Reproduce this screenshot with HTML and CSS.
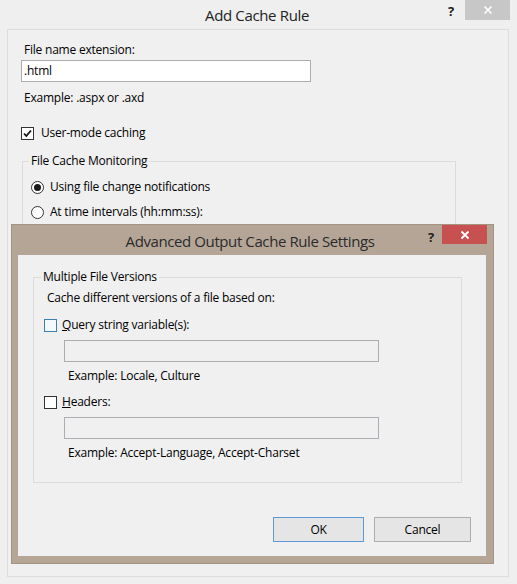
FILE: index.html
```html
<!DOCTYPE html>
<html lang="en">
<head>
<meta charset="utf-8">
<title>Add Cache Rule</title>
<link rel="stylesheet" href="styles.css">
</head>
<body>
<div class="window">
  <div class="titlebar">
    <div class="title">Add Cache Rule</div>
    <div class="help">?</div>
    <div class="close close-inactive">
      <svg width="10" height="10" viewBox="0 0 10 10"><path d="M1.5 1.5 L8.5 8.5 M8.5 1.5 L1.5 8.5" stroke="#fff" stroke-width="1.6"/></svg>
    </div>
  </div>
  <div class="panel">
    <div class="text lbl">File name extension:</div>
    <div class="input ext">.html</div>
    <div class="text lbl example1">Example: .aspx or .axd</div>
    <div class="row check-row">
      <span class="check checked">
        <svg width="11" height="11" viewBox="0 0 11 11"><path d="M2 5.5 L4.3 8 L9 2.5" fill="none" stroke="#111" stroke-width="1.8"/></svg>
      </span>
      <span class="text">User-mode caching</span>
    </div>
    <div class="group monitor">
      <div class="group-title">File Cache Monitoring</div>
      <div class="row radio-row first">
        <span class="radio selected"><span class="dot"></span></span>
        <span class="text">Using file change notifications</span>
      </div>
      <div class="row radio-row">
        <span class="radio"></span>
        <span class="text">At time intervals (hh:mm:ss):</span>
      </div>
    </div>
  </div>
</div>

<div class="dialog">
  <div class="dialog-titlebar">
    <div class="dialog-title">Advanced Output Cache Rule Settings</div>
    <div class="help dialog-help">?</div>
    <div class="close close-active">
      <svg width="10" height="10" viewBox="0 0 10 10"><path d="M1.5 1.5 L8.5 8.5 M8.5 1.5 L1.5 8.5" stroke="#fff" stroke-width="1.8"/></svg>
    </div>
  </div>
  <div class="client">
    <div class="group versions">
      <div class="group-title">Multiple File Versions</div>
      <div class="text intro">Cache different versions of a file based on:</div>
      <div class="row opt-row">
        <span class="check hover"></span>
        <span class="text"><u>Q</u>uery string variable(s):</span>
      </div>
      <div class="input disabled"></div>
      <div class="text hint">Example: Locale, Culture</div>
      <div class="row opt-row second">
        <span class="check"></span>
        <span class="text"><u>H</u>eaders:</span>
      </div>
      <div class="input disabled"></div>
      <div class="text hint">Example: Accept-Language, Accept-Charset</div>
    </div>
    <div class="buttons">
      <button class="btn default">OK</button>
      <button class="btn cancel">Cancel</button>
    </div>
  </div>
</div>
</body>
</html>
```

FILE: styles.css
```css
* { box-sizing: border-box; }

html, body {
  margin: 0;
  padding: 0;
}

body {
  width: 517px;
  height: 584px;
  background: #efefef;
  font-family: "Open Sans", "Noto Sans", "DejaVu Sans", sans-serif;
  font-size: 12px;
  letter-spacing: -0.22px;
  color: #000;
  position: relative;
  overflow: hidden;
}

.text {
  line-height: 16px;
  white-space: nowrap;
}

.window {
  width: 517px;
  height: 584px;
  display: flex;
  flex-direction: column;
}

.titlebar {
  height: 29px;
  position: relative;
  display: flex;
  justify-content: center;
}

.title {
  font-size: 15px;
  letter-spacing: -0.35px;
  line-height: 20px;
  padding-top: 5px;
  padding-right: 3px;
  color: #222;
}

.help {
  position: absolute;
  font-weight: bold;
  font-size: 13px;
  line-height: 14px;
  color: #222;
  left: 448px;
  top: 4px;
}

.close {
  position: absolute;
  width: 45px;
  height: 20px;
  display: flex;
  align-items: center;
  justify-content: center;
}

.close-inactive {
  left: 465px;
  top: 0;
  background: #c7c7c7;
}

.panel {
  margin: 0 8px 7px 7px;
  flex: 1;
  border: 1px solid #dcdcdc;
  background: #f0f0f0;
  padding: 12px 0 0 13px;
}

.lbl {
  padding-left: 3px;
}

.input {
  height: 22px;
  border: 1px solid #abadb3;
  background: #fff;
  line-height: 20px;
  padding-left: 2px;
}

.ext {
  width: 290px;
  margin-top: 2px;
}

.example1 {
  margin-top: 8px;
}

.row {
  display: flex;
  align-items: center;
  height: 16px;
}

.check-row {
  margin-top: 19px;
  gap: 7px;
}

.check {
  width: 13px;
  height: 13px;
  border: 1px solid #333;
  background: #fff;
  display: flex;
  align-items: center;
  justify-content: center;
  flex: none;
}

.check.hover {
  border-color: #3c7fb1;
  background: #f4f9fd;
}

.group {
  border: 1px solid #dcdcdc;
}

.group-title {
  width: fit-content;
  background: #f0f0f0;
  padding: 0 2px;
  line-height: 16px;
  white-space: nowrap;
  margin-top: -9px;
}

.monitor {
  margin: 20px 0 0 1px;
  width: 434px;
  height: 120px;
}

.monitor .group-title {
  margin-left: 6px;
}

.radio-row {
  margin-left: 8px;
  gap: 6px;
  margin-top: 9px;
}

.radio-row.first {
  margin-top: 10px;
}

.radio {
  width: 13px;
  height: 13px;
  border: 1px solid #333;
  border-radius: 50%;
  background: #fff;
  display: flex;
  align-items: center;
  justify-content: center;
  flex: none;
}

.dot {
  width: 7px;
  height: 7px;
  border-radius: 50%;
  background: #1a1a1a;
}

/* Dialog window on top */
.dialog {
  position: absolute;
  left: 11px;
  top: 224px;
  width: 483px;
  height: 340px;
  background: #b4a597;
  border: 1px solid #a29383;
  padding: 0 7px 7px 6px;
  display: flex;
  flex-direction: column;
}

.dialog-titlebar {
  height: 30px;
  position: relative;
  display: flex;
  justify-content: center;
}

.dialog-title {
  font-size: 15px;
  letter-spacing: -0.4px;
  line-height: 20px;
  padding-top: 6px;
  padding-right: 4px;
  color: #2b2b2b;
}

.dialog-help {
  left: 410px;
  top: 5px;
}

.close-active {
  left: 424px;
  top: 0;
  height: 19px;
  background: #c75050;
}

.client {
  flex: 1;
  background: #f0f0f0;
  padding: 22px 0 0 15px;
  display: flex;
  flex-direction: column;
}

.versions {
  width: 429px;
  padding: 0 0 21px 0;
}

.versions .group-title {
  margin-left: 7px;
}

.intro {
  margin: 5px 0 0 13px;
}

.opt-row {
  margin: 11px 0 0 10px;
  gap: 5px;
}

.opt-row.second {
  margin-top: 10px;
}

.input.disabled {
  background: #f0f0f0;
  width: 315px;
  margin: 7px 0 0 30px;
}

.hint {
  margin: 6px 0 0 34px;
}

.buttons {
  display: flex;
  gap: 10px;
  margin: 34px 0 0 240px;
}

.btn {
  height: 25px;
  font-family: inherit;
  font-size: 12px;
  letter-spacing: inherit;
  color: #000;
  background: #e5e5e5;
  border: 1px solid #adadad;
  padding: 0;
}

.btn.default {
  width: 91px;
  border-color: #5d9bd6;
}

.btn.cancel {
  width: 97px;
}
```
